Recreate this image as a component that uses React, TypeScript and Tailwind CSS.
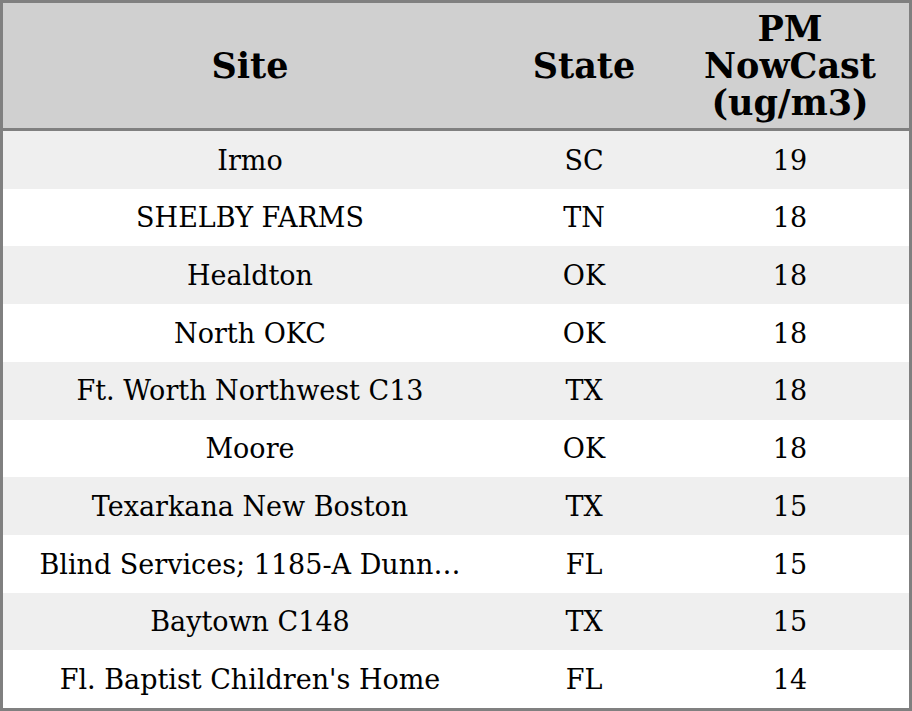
import React from "react";

const rows: [string, string, string][] = [
  ["Irmo", "SC", "19"],
  ["SHELBY FARMS", "TN", "18"],
  ["Healdton", "OK", "18"],
  ["North OKC", "OK", "18"],
  ["Ft. Worth Northwest C13", "TX", "18"],
  ["Moore", "OK", "18"],
  ["Texarkana New Boston", "TX", "15"],
  ["Blind Services; 1185-A Dunn\u2026", "FL", "15"],
  ["Baytown C148", "TX", "15"],
  ["Fl. Baptist Children's Home", "FL", "14"],
];

export default function App() {
  return (
    <div
      className="w-[912px] h-[711px] bg-white text-black"
      style={{ fontFamily: '"DejaVu Serif", serif' }}
    >
      <div className="w-full h-full border-[3px] border-[#808080] flex flex-col">
        <div className="grid grid-cols-[494px_174px_238px] h-[128px] shrink-0 bg-[#d0d0d0] border-b-[3px] border-[#808080] font-bold text-[35px] leading-[37px]">
          <div className="flex items-center justify-center text-center">Site</div>
          <div className="flex items-center justify-center text-center">State</div>
          <div className="flex items-center justify-center text-center">
            PM
            <br />
            NowCast
            <br />
            (ug/m3)
          </div>
        </div>
        <div className="flex-1 flex flex-col">
          {rows.map((r, i) => (
            <div
              key={i}
              className={
                "flex-1 grid grid-cols-[494px_174px_238px] items-center pt-[2px] text-[27px] " +
                (i % 2 === 0 ? "bg-[#efefef]" : "bg-white")
              }
            >
              <div className="px-[20px] text-center whitespace-nowrap overflow-hidden">{r[0]}</div>
              <div className="text-center">{r[1]}</div>
              <div className="text-center">{r[2]}</div>
            </div>
          ))}
        </div>
      </div>
    </div>
  );
}
